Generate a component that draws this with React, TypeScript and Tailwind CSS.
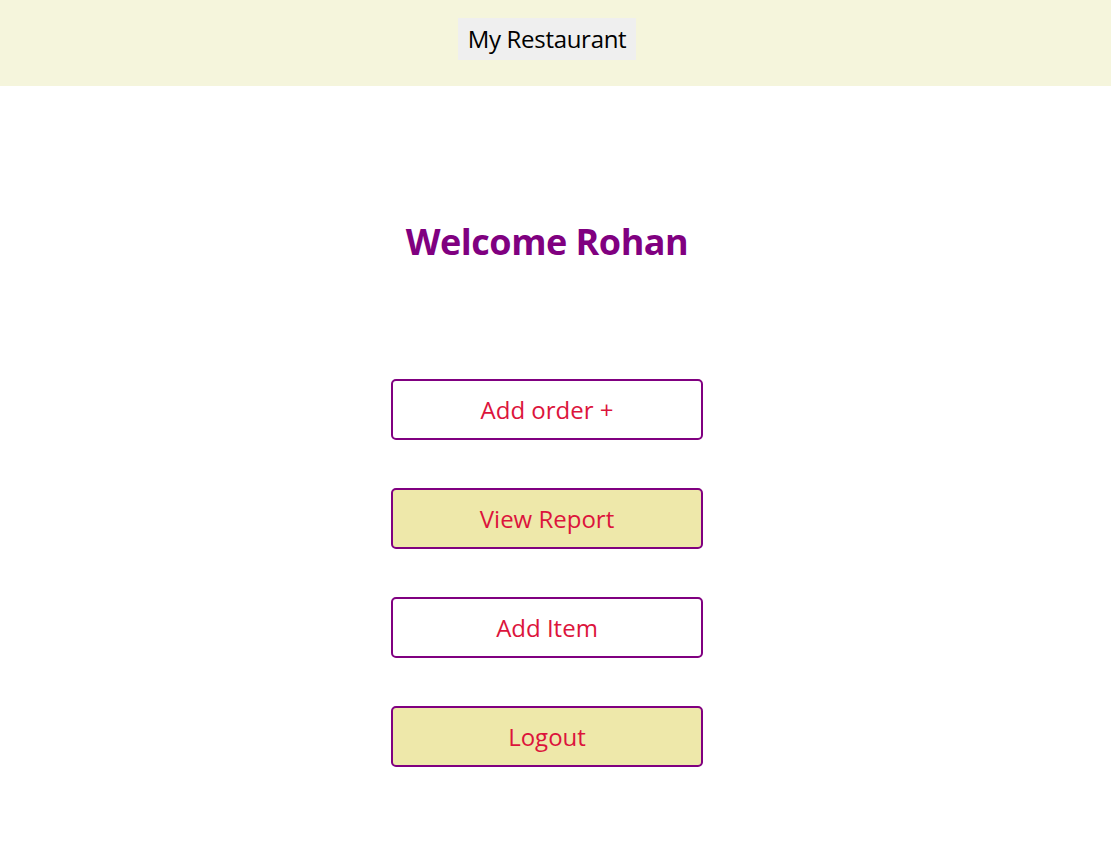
import React from "react";

export default function App() {
  const btn =
    "w-[312px] h-[61px] border-2 border-[#800080] rounded-[5px] text-[#dc143c] text-[24px] leading-none flex items-center justify-center";
  return (
    <div className="min-h-[863px] bg-white font-['Open_Sans',sans-serif]">
      <header className="h-[86px] bg-[#f5f5dc] flex items-start justify-center pt-[18px] pr-[17px]">
        <div className="h-[42px] px-[10px] bg-[#efefef] text-black text-[24px] flex items-center tracking-[-0.3px]">
          My Restaurant
        </div>
      </header>
      <div className="flex flex-col items-center pr-[17px]">
        <h1 className="mt-[134px] text-[36px] font-bold text-[#800080] leading-[44px] tracking-[-0.5px]">
          Welcome Rohan
        </h1>
        <div className="mt-[115px] flex flex-col gap-[48px]">
          <button className={btn + " bg-white"}>Add order +</button>
          <button className={btn + " bg-[#eee8aa]"}>View Report</button>
          <button className={btn + " bg-white"}>Add Item</button>
          <button className={btn + " bg-[#eee8aa]"}>Logout</button>
        </div>
      </div>
    </div>
  );
}
